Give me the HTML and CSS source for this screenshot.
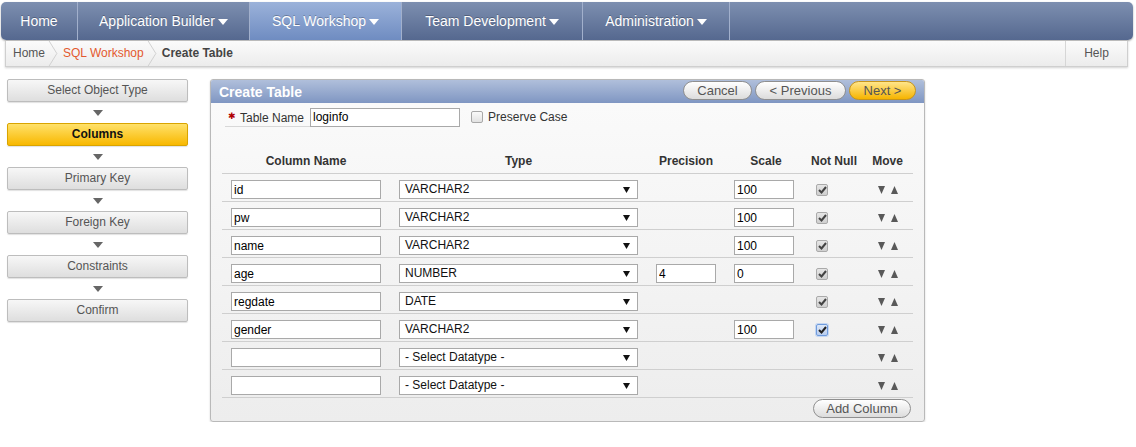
FILE: index.html
```html
<!DOCTYPE html>
<html>
<head>
<meta charset="utf-8">
<title>Create Table</title>
<link rel="stylesheet" href="styles.css">
</head>
<body>
<nav class="topbar">
  <a class="tab tab-home">Home</a>
  <a class="tab tab-app">Application Builder<span class="caret"></span></a>
  <a class="tab tab-sql active">SQL Workshop<span class="caret"></span></a>
  <a class="tab tab-team">Team Development<span class="caret"></span></a>
  <a class="tab tab-admin">Administration<span class="caret"></span></a>
</nav>
<div class="crumbs">
  <div class="trail">
    <span class="crumb">Home</span>
    <svg class="chev" width="10" height="26" viewBox="0 0 10 26"><polyline points="1,0 9,13 1,26" fill="none" stroke="#cfcfcf" stroke-width="1"/></svg>
    <span class="crumb link">SQL Workshop</span>
    <svg class="chev" width="10" height="26" viewBox="0 0 10 26"><polyline points="1,0 9,13 1,26" fill="none" stroke="#cfcfcf" stroke-width="1"/></svg>
    <span class="crumb current">Create Table</span>
  </div>
  <div class="help">Help</div>
</div>

<div class="main">
  <ul class="wizard">
    <li class="step">Select Object Type</li>
    <li class="arrow"></li>
    <li class="step on">Columns</li>
    <li class="arrow"></li>
    <li class="step">Primary Key</li>
    <li class="arrow"></li>
    <li class="step">Foreign Key</li>
    <li class="arrow"></li>
    <li class="step">Constraints</li>
    <li class="arrow"></li>
    <li class="step">Confirm</li>
  </ul>

  <section class="panel">
    <header class="panel-head">
      <h1>Create Table</h1>
      <div class="actions">
        <button class="pill w-cancel">Cancel</button>
        <button class="pill w-prev">&lt; Previous</button>
        <button class="pill next w-next">Next &gt;</button>
      </div>
    </header>
    <div class="panel-body">
      <div class="namerow">
        <label class="req"><span class="star">✱</span>Table Name</label>
        <input class="txt tname" value="loginfo">
        <span class="cb cb-empty"></span>
        <span class="pc">Preserve Case</span>
      </div>

      <div class="grid head">
        <div class="h">Column Name</div>
        <div class="h">Type</div>
        <div class="h">Precision</div>
        <div class="h">Scale</div>
        <div class="h">Not Null</div>
        <div class="h">Move</div>
      </div>

      <div class="grid row">
        <div class="c"><input class="txt cname" value="id"></div>
        <div class="c"><div class="sel">VARCHAR2<svg class="dd" width="7" height="6" viewBox="0 0 7 6"><polygon points="0,0 7,0 3.5,6" fill="#111"/></svg></div></div>
        <div class="c"></div>
        <div class="c"><input class="txt num" value="100"></div>
        <div class="c"><span class="cb on"><svg width="9" height="8" viewBox="0 0 9 8"><polyline points="1,4 3.5,6.5 8,1" fill="none" stroke="#444" stroke-width="2"/></svg></span></div>
        <div class="c"><span class="mv"><svg width="22" height="8" viewBox="0 0 22 8"><polygon points="0,0 7,0 3.5,8" fill="#595959"/><polygon points="13,8 20,8 16.5,0" fill="#595959"/></svg></span></div>
      </div>
      <div class="grid row">
        <div class="c"><input class="txt cname" value="pw"></div>
        <div class="c"><div class="sel">VARCHAR2<svg class="dd" width="7" height="6" viewBox="0 0 7 6"><polygon points="0,0 7,0 3.5,6" fill="#111"/></svg></div></div>
        <div class="c"></div>
        <div class="c"><input class="txt num" value="100"></div>
        <div class="c"><span class="cb on"><svg width="9" height="8" viewBox="0 0 9 8"><polyline points="1,4 3.5,6.5 8,1" fill="none" stroke="#444" stroke-width="2"/></svg></span></div>
        <div class="c"><span class="mv"><svg width="22" height="8" viewBox="0 0 22 8"><polygon points="0,0 7,0 3.5,8" fill="#595959"/><polygon points="13,8 20,8 16.5,0" fill="#595959"/></svg></span></div>
      </div>
      <div class="grid row">
        <div class="c"><input class="txt cname" value="name"></div>
        <div class="c"><div class="sel">VARCHAR2<svg class="dd" width="7" height="6" viewBox="0 0 7 6"><polygon points="0,0 7,0 3.5,6" fill="#111"/></svg></div></div>
        <div class="c"></div>
        <div class="c"><input class="txt num" value="100"></div>
        <div class="c"><span class="cb on"><svg width="9" height="8" viewBox="0 0 9 8"><polyline points="1,4 3.5,6.5 8,1" fill="none" stroke="#444" stroke-width="2"/></svg></span></div>
        <div class="c"><span class="mv"><svg width="22" height="8" viewBox="0 0 22 8"><polygon points="0,0 7,0 3.5,8" fill="#595959"/><polygon points="13,8 20,8 16.5,0" fill="#595959"/></svg></span></div>
      </div>
      <div class="grid row">
        <div class="c"><input class="txt cname" value="age"></div>
        <div class="c"><div class="sel">NUMBER<svg class="dd" width="7" height="6" viewBox="0 0 7 6"><polygon points="0,0 7,0 3.5,6" fill="#111"/></svg></div></div>
        <div class="c"><input class="txt num" value="4"></div>
        <div class="c"><input class="txt num" value="0"></div>
        <div class="c"><span class="cb on"><svg width="9" height="8" viewBox="0 0 9 8"><polyline points="1,4 3.5,6.5 8,1" fill="none" stroke="#444" stroke-width="2"/></svg></span></div>
        <div class="c"><span class="mv"><svg width="22" height="8" viewBox="0 0 22 8"><polygon points="0,0 7,0 3.5,8" fill="#595959"/><polygon points="13,8 20,8 16.5,0" fill="#595959"/></svg></span></div>
      </div>
      <div class="grid row">
        <div class="c"><input class="txt cname" value="regdate"></div>
        <div class="c"><div class="sel">DATE<svg class="dd" width="7" height="6" viewBox="0 0 7 6"><polygon points="0,0 7,0 3.5,6" fill="#111"/></svg></div></div>
        <div class="c"></div>
        <div class="c"></div>
        <div class="c"><span class="cb on"><svg width="9" height="8" viewBox="0 0 9 8"><polyline points="1,4 3.5,6.5 8,1" fill="none" stroke="#444" stroke-width="2"/></svg></span></div>
        <div class="c"><span class="mv"><svg width="22" height="8" viewBox="0 0 22 8"><polygon points="0,0 7,0 3.5,8" fill="#595959"/><polygon points="13,8 20,8 16.5,0" fill="#595959"/></svg></span></div>
      </div>
      <div class="grid row">
        <div class="c"><input class="txt cname" value="gender"></div>
        <div class="c"><div class="sel">VARCHAR2<svg class="dd" width="7" height="6" viewBox="0 0 7 6"><polygon points="0,0 7,0 3.5,6" fill="#111"/></svg></div></div>
        <div class="c"></div>
        <div class="c"><input class="txt num" value="100"></div>
        <div class="c"><span class="cb on focus"><svg width="9" height="8" viewBox="0 0 9 8"><polyline points="1,4 3.5,6.5 8,1" fill="none" stroke="#222" stroke-width="2"/></svg></span></div>
        <div class="c"><span class="mv"><svg width="22" height="8" viewBox="0 0 22 8"><polygon points="0,0 7,0 3.5,8" fill="#595959"/><polygon points="13,8 20,8 16.5,0" fill="#595959"/></svg></span></div>
      </div>
      <div class="grid row">
        <div class="c"><input class="txt cname" value=""></div>
        <div class="c"><div class="sel">- Select Datatype -<svg class="dd" width="7" height="6" viewBox="0 0 7 6"><polygon points="0,0 7,0 3.5,6" fill="#111"/></svg></div></div>
        <div class="c"></div>
        <div class="c"></div>
        <div class="c"></div>
        <div class="c"><span class="mv"><svg width="22" height="8" viewBox="0 0 22 8"><polygon points="0,0 7,0 3.5,8" fill="#595959"/><polygon points="13,8 20,8 16.5,0" fill="#595959"/></svg></span></div>
      </div>
      <div class="grid row">
        <div class="c"><input class="txt cname" value=""></div>
        <div class="c"><div class="sel">- Select Datatype -<svg class="dd" width="7" height="6" viewBox="0 0 7 6"><polygon points="0,0 7,0 3.5,6" fill="#111"/></svg></div></div>
        <div class="c"></div>
        <div class="c"></div>
        <div class="c"></div>
        <div class="c"><span class="mv"><svg width="22" height="8" viewBox="0 0 22 8"><polygon points="0,0 7,0 3.5,8" fill="#595959"/><polygon points="13,8 20,8 16.5,0" fill="#595959"/></svg></span></div>
      </div>

      <div class="foot">
        <button class="pill addcol">Add Column</button>
      </div>
    </div>
  </section>
</div>
</body>
</html>
```

FILE: styles.css
```css
* { box-sizing: border-box; }
html, body { margin: 0; padding: 0; background: #fff; }
body { font-family: "Liberation Sans", Arial, sans-serif; font-size: 12px; color: #333; }

/* top navigation */
.topbar {
  display: flex;
  height: 38px;
  margin: 2px 3px 0 1px;
  border-radius: 5px;
  background: linear-gradient(#7d8fb0, #55688f);
  box-shadow: 0 1px 2px rgba(0,0,0,.35);
  overflow: hidden;
}
.tab {
  display: flex;
  align-items: center;
  justify-content: center;
  height: 38px;
  color: #fff;
  font-size: 14px;
  text-shadow: 0 -1px 0 rgba(0,0,0,.25);
  border-right: 1px solid #a2b0cc;
}
.tab-home { width: 77px; }
.tab-app { width: 172px; }
.tab-sql { width: 152px; }
.tab-team { width: 181px; }
.tab-admin { width: 147px; }
.tab.active { background: linear-gradient(#9bb2da, #6f8cc1); }
.caret {
  display: inline-block;
  width: 0; height: 0;
  margin-left: 3px;
  margin-top: 1px;
  border-left: 5px solid transparent;
  border-right: 5px solid transparent;
  border-top: 6px solid #fff;
}

/* breadcrumb */
.crumbs {
  display: flex;
  justify-content: space-between;
  height: 26px;
  margin: 1px 8px 0 5px;
  border: 1px solid #cfcfcf;
  border-top: none;
  background: linear-gradient(#fbfbfb, #ececec);
  box-shadow: 0 1px 2px rgba(0,0,0,.18);
}
.trail { display: flex; align-items: center; padding-left: 7px; }
.crumb { font-size: 12px; color: #555; line-height: 25px; }
.crumb.link { color: #e3592e; }
.crumb.current { font-weight: bold; color: #444; }
.chev { margin: 0 5px 0 3px; display: block; height: 25px; }
.help {
  width: 62px;
  border-left: 1px solid #d6d6d6;
  line-height: 25px;
  text-align: center;
  color: #555;
}

/* main area */
.main { display: flex; align-items: flex-start; padding: 12px 0 0 7px; }

.wizard { list-style: none; margin: 0; padding: 0; width: 181px; }
.step {
  height: 23px;
  line-height: 21px;
  text-align: center;
  color: #555;
  border: 1px solid #bdbdbd;
  border-radius: 2px;
  background: linear-gradient(#f7f7f7, #dedede);
  box-shadow: 0 1px 1px rgba(0,0,0,.12);
}
.step.on {
  color: #111;
  font-weight: bold;
  border-color: #d9a400;
  background: linear-gradient(#ffe16a, #f8b800);
}
.arrow { height: 21px; display: flex; align-items: center; justify-content: center; }
.arrow::before {
  content: "";
  width: 0; height: 0;
  border-left: 5px solid transparent;
  border-right: 5px solid transparent;
  border-top: 6px solid #666;
}

/* panel */
.panel {
  width: 715px;
  margin-left: 22px;
  border: 1px solid #b9b9b9;
  border-radius: 3px;
  background: linear-gradient(#fbfbfb, #ededed);
  box-shadow: 0 1px 2px rgba(0,0,0,.18);
  overflow: hidden;
}
.panel-head {
  display: flex;
  justify-content: space-between;
  align-items: center;
  height: 23px;
  padding: 0 8px 0 8px;
  background: linear-gradient(#b0bfdb, #7f96c2);
}
.panel-head h1 { margin: 0; font-size: 14px; color: #fff; font-weight: bold; }
.actions { display: flex; gap: 3px; margin-top: -3px; }
.pill {
  height: 19px;
  padding: 0;
  font-family: "Liberation Sans", Arial, sans-serif;
  font-size: 13px;
  color: #555;
  border: 1px solid #8f8f8f;
  border-radius: 10px;
  background: linear-gradient(#ffffff, #dcdcdc);
  line-height: 17px;
}
.w-cancel { width: 69px; }
.w-prev { width: 91px; }
.w-next { width: 67px; }
.pill.next { background: linear-gradient(#ffe58a, #f6b400); border-color: #c8951a; color: #555; }

.panel-body { padding: 4px 11px 3px 11px; }

.namerow { display: flex; align-items: center; height: 20px; padding-left: 3px; }
.req {
  display: flex;
  align-items: center;
  height: 18px;
  padding: 0 6px 0 3px;
  border-bottom: 1px solid #d8d8d8;
  font-size: 12px;
  color: #333;
  margin-top: 2px;
}
.star { color: #b00000; font-size: 9px; margin-right: 4px; position: relative; top: -2px; }
.txt {
  height: 19px;
  border: 1px solid #a9a9a9;
  background: #fff;
  font-family: "Liberation Sans", Arial, sans-serif;
  font-size: 12px;
  color: #000;
  padding: 0 2px;
  margin: 0;
}
.tname { width: 150px; }
.namerow .cb-empty { margin-left: 11px; }
.pc { margin-left: 5px; font-size: 12px; color: #333; }

.grid {
  display: grid;
  grid-template-columns: 168px 257px 78px 82px 54px 53px;
  border-bottom: 1px solid #cfcfcf;
}
.head { height: 28px; margin-top: 19px; align-items: center; padding-top: 2px; }
.h { text-align: center; font-weight: bold; color: #333; font-size: 12px; }
.row { height: 28px; padding-top: 4px; align-items: center; }
.c { padding-left: 9px; display: flex; align-items: center; }
.cname { width: 150px; }
.num { width: 60px; }
.sel {
  position: relative;
  width: 239px;
  height: 19px;
  border: 1px solid #a9a9a9;
  background: #fff;
  color: #111;
  font-size: 12px;
  line-height: 17px;
  padding-left: 5px;
}
.sel .dd { position: absolute; right: 7px; top: 6px; }

.cb {
  display: inline-flex;
  align-items: center;
  justify-content: center;
  width: 12px; height: 12px;
  border: 1px solid #b5b5b5;
  border-radius: 2px;
  background: linear-gradient(#f4f4f4, #d9d9d9);
}
.cb.on { background: linear-gradient(#e6e6e6, #cfcfcf); border-color: #aaa; }
.cb.focus { border-color: #6f9bdc; background: linear-gradient(#dde8f8, #b9cdee); box-shadow: 0 0 0 1px #c5d7f2; }
.cb-empty { background: linear-gradient(#fafafa, #e2e2e2); border-color: #a8a8a8; }
.mv { display: block; padding-left: 8px; line-height: 0; }

.foot { display: flex; justify-content: flex-end; padding: 1px 2px 0 0; }
.addcol { width: 98px; }
```
